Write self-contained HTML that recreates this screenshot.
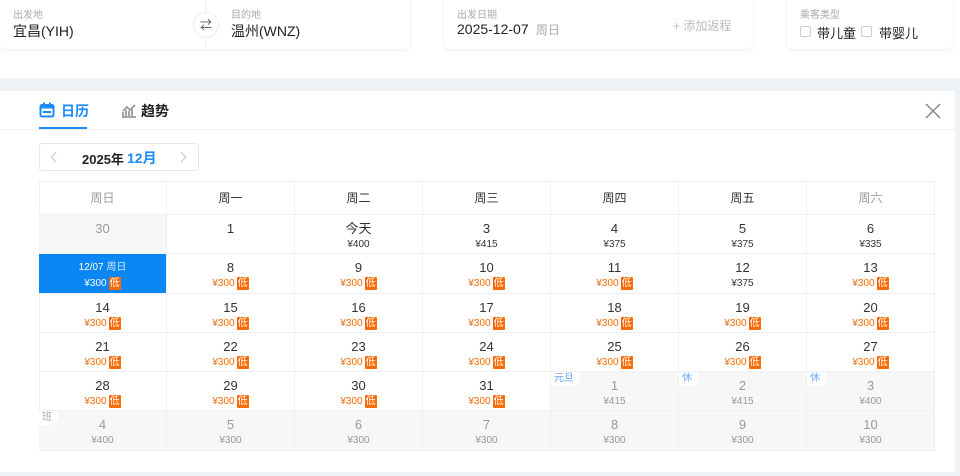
<!DOCTYPE html>
<html><head><meta charset="utf-8"><style>
*{margin:0;padding:0;box-sizing:border-box}
body{width:960px;height:476px;overflow:hidden;background:#fff;font-family:"Liberation Sans","Noto Sans CJK SC",sans-serif;position:relative;color:#333}
.a{position:absolute}
.card{position:absolute;background:#fff;border-radius:0 0 6px 6px;box-shadow:0 1px 4px rgba(0,0,0,.08)}
.lbl{font-size:10px;color:#aaa}
.val{font-size:14px;color:#222}
.cell{position:absolute;width:128px;height:39px;text-align:center;border-right:1px solid #f0f0f0;border-bottom:1px solid #f0f0f0}
.n{font-size:13px;color:#333;line-height:14px;margin-top:7px}
.p{font-size:10px;color:#333;line-height:14px;margin-top:2px}
.o .p{color:#ff6a00}
.lo{display:inline-block;background:#ff6a00;color:#fff;font-size:10px;line-height:13px;padding:0 1px;border-radius:1px;margin-left:2px}
.g{background:#f7f7f7}
.g .n,.g .p{color:#999}
.tag{position:absolute;left:0;top:0;background:#fff;color:#6aa8ff;font-size:10px;line-height:14px;padding:0 6px 0 3px;border-radius:0 0 8px 0}
.hd{position:absolute;width:128px;height:33px;line-height:33px;text-align:center;font-size:12px;color:#333;border-right:1px solid #f0f0f0;border-bottom:1px solid #f0f0f0}
</style></head><body>
<div class="card" style="left:0;top:-4px;width:410px;height:53px">
 <div class="a lbl" style="left:13px;top:10px">出发地</div>
 <div class="a val" style="left:13px;top:25px">宜昌(YIH)</div>
 <div class="a" style="left:205px;top:4px;width:1px;height:49px;background:#eee"></div>
 <div class="a" style="left:193px;top:16px;width:26px;height:26px;border-radius:50%;background:#fff;border:1px solid #eee;font-size:12px;text-align:center;line-height:24px;color:#555">⇄</div>
 <div class="a lbl" style="left:231px;top:10px">目的地</div>
 <div class="a val" style="left:231px;top:25px">温州(WNZ)</div>
</div>
<div class="card" style="left:444px;top:-4px;width:309px;height:53px">
 <div class="a lbl" style="left:13px;top:10px">出发日期</div>
 <div class="a val" style="left:13px;top:25px">2025-12-07 <span style="font-size:12px;color:#aaa">&nbsp;周日</span></div>
 <div class="a" style="left:229px;top:21px;font-size:12px;color:#bbb">+ 添加返程</div>
</div>
<div class="card" style="left:787px;top:-4px;width:166px;height:53px">
 <div class="a lbl" style="left:13px;top:10px">乘客类型</div>
 <div class="a" style="left:13px;top:30px;width:11px;height:11px;border:1px solid #ccc;border-radius:2px"></div>
 <div class="a" style="left:30px;top:27px;font-size:13px;color:#222">带儿童</div>
 <div class="a" style="left:74px;top:30px;width:11px;height:11px;border:1px solid #ccc;border-radius:2px"></div>
 <div class="a" style="left:92px;top:27px;font-size:13px;color:#222">带婴儿</div>
</div>
<div class="a" style="left:0;top:78px;width:960px;height:398px;background:#eef1f5"></div>
<div class="a" style="left:0;top:91px;width:955px;height:381px;background:#fff"></div>
<svg class="a" style="left:39px;top:102px" width="16" height="16" viewBox="0 0 16 16"><rect x="1.5" y="3" width="13" height="11.5" rx="1.5" fill="none" stroke="#1a8cff" stroke-width="2"/><rect x="1.5" y="3" width="13" height="3.5" fill="#1a8cff"/><rect x="4" y="0.5" width="2" height="3.5" fill="#1a8cff"/><rect x="10" y="0.5" width="2" height="3.5" fill="#1a8cff"/><rect x="4" y="9" width="8" height="2" fill="#1a8cff"/></svg>
<div class="a" style="left:61px;top:101px;font-size:14px;font-weight:bold;color:#1a8cff">日历</div>
<svg class="a" style="left:121px;top:102px" width="15" height="16" viewBox="0 0 15 16"><path d="M1 15h14M2 14V10M5 14V8M8 14V9M11 14V6M2 9l4-4 3 3 5-5" fill="none" stroke="#999" stroke-width="1.8"/></svg>
<div class="a" style="left:141px;top:101px;font-size:14px;font-weight:bold;color:#222">趋势</div>
<div class="a" style="left:39px;top:127px;width:48px;height:2px;background:#1a8cff"></div>
<div class="a" style="left:0;top:129px;width:955px;height:1px;background:#eee"></div>
<svg class="a" style="left:925px;top:103px" width="16" height="16" viewBox="0 0 16 16"><path d="M1 1L15 15M15 1L1 15" stroke="#888" stroke-width="1.5"/></svg>
<div class="a" style="left:39px;top:143px;width:160px;height:28px;border:1px solid #e8e8e8;border-radius:3px"></div>
<svg class="a" style="left:50px;top:151px" width="8" height="12" viewBox="0 0 8 12"><path d="M6 1L1.5 6L6 11" fill="none" stroke="#ccc" stroke-width="1.3"/></svg>
<div class="a" style="left:82px;top:149px;font-size:13px;font-weight:bold;color:#222">2025年</div>
<div class="a" style="left:127px;top:148px;font-size:14px;font-weight:bold;color:#1a8cff">12月</div>
<svg class="a" style="left:179px;top:151px" width="8" height="12" viewBox="0 0 8 12"><path d="M2 1L6.5 6L2 11" fill="none" stroke="#ccc" stroke-width="1.3"/></svg>
<div class="a" style="left:39px;top:181px;width:896px;height:270px;border-top:1px solid #f0f0f0;border-left:1px solid #f0f0f0"></div>
<div id="cal"></div>
<script>
var L=39,W=128,T=[215,254,294,333,372,411],H=[39,40,39,39,39,40];
var hd=['周日','周一','周二','周三','周四','周五','周六'],s='';
for(var i=0;i<7;i++)s+='<div class="hd" style="left:'+(L+i*W)+'px;top:182px;'+((i==0||i==6)?'color:#999':'')+'">'+hd[i]+'</div>';
var d=[
[['30','','g'],['1',''],['今天','¥400'],['3','¥415'],['4','¥375'],['5','¥375'],['6','¥335']],
[['sel'],['8','o'],['9','o'],['10','o'],['11','o'],['12','¥375'],['13','o']],
[['14','o'],['15','o'],['16','o'],['17','o'],['18','o'],['19','o'],['20','o']],
[['21','o'],['22','o'],['23','o'],['24','o'],['25','o'],['26','o'],['27','o']],
[['28','o'],['29','o'],['30','o'],['31','o'],['1','¥415','g','元旦'],['2','¥415','g','休'],['3','¥400','g','休']],
[['4','¥400','g','班'],['5','¥300','g'],['6','¥300','g'],['7','¥300','g'],['8','¥300','g'],['9','¥300','g'],['10','¥300','g']]];
for(var r=0;r<6;r++)for(var c=0;c<7;c++){var x=d[r][c],st='left:'+(L+c*W)+'px;top:'+T[r]+'px;height:'+H[r]+'px;';
if(x[0]=='sel'){s+='<div class="cell" style="'+st+'background:#0a86f5;color:#fff"><div class="p" style="color:#fff;margin-top:7px">12/07 <span style="color:#cfe6ff">周日</span></div><div class="p" style="color:#fff">¥300<span class="lo">低</span></div></div>';continue;}
var cls='cell'+(x[1]=='o'?' o':'')+(x[2]=='g'?' g':'');
var pr=x[1]=='o'?'¥300<span class="lo">低</span>':x[1];
s+='<div class="'+cls+'" style="'+st+'">'+(x[3]?'<span class="tag"'+(x[3]=='班'?' style="color:#aaa"':'')+'>'+x[3]+'</span>':'')+'<div class="n">'+x[0]+'</div><div class="p">'+pr+'</div></div>';}
document.getElementById('cal').innerHTML=s;
</script>
</body></html>
